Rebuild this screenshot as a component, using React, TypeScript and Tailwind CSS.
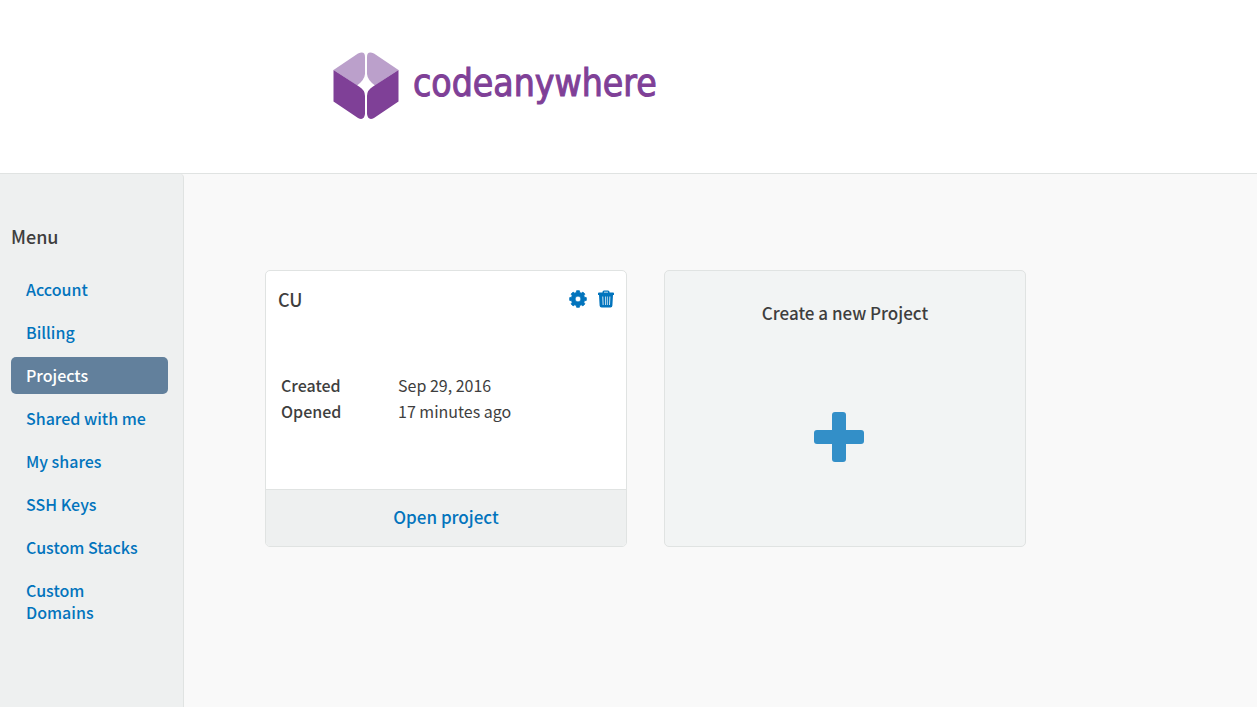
const menuItems = [
  'Account',
  'Billing',
  'Projects',
  'Shared with me',
  'My shares',
  'SSH Keys',
  'Custom Stacks',
  'Custom Domains',
];

function CubeMark() {
  return (
    <svg viewBox="0 0 66 68" className="h-[68px] w-[66px]" aria-hidden="true">
      <g fill="#bba0cb">
        <path d="M0.500 18L25 1.500Q32 -1.500 32 5V22Q31.500 28 24 33.500Z" />
        <path d="M65.500 18L41 1.500Q34 -1.500 34 5V22Q34.500 28 42 33.500Z" />
      </g>
      <g fill="#7f4097">
        <path d="M0.500 18L26 34.500Q32 38 32 44V62Q31 69 25 66L0.500 49.500Z" />
        <path d="M65.500 18L40 34.500Q34 38 34 44V62Q35 69 41 66L65.500 49.500Z" />
      </g>
    </svg>
  );
}

function GearIcon() {
  return (
    <svg viewBox="0 0 18 18" className="size-[18px]" fill="currentColor" aria-hidden="true">
      <path
        fillRule="evenodd"
        stroke="currentColor"
        strokeWidth="0.8"
        strokeLinejoin="round"
        d="M7.600 0.700h2.800l.4 1.900 1.400.6 1.700-1.100 2 2-1.100 1.700.6 1.400 1.900.4v2.800l-1.900.4-.6 1.400 1.100 1.700-2 2-1.700-1.100-1.400.6-.4 1.900H7.600l-.4-1.900-1.400-.6-1.700 1.100-2-2 1.100-1.700-.6-1.400-1.900-.4V7.600l1.900-.4.6-1.400-1.100-1.700 2-2 1.700 1.100 1.400-.6zM9 6.100a2.900 2.900 0 1 0 0 5.800 2.900 2.900 0 0 0 0-5.800z"
      />
    </svg>
  );
}

function TrashIcon() {
  return (
    <svg viewBox="0 0 16 18" className="h-[18px] w-4" fill="currentColor" aria-hidden="true">
      <path
        fillRule="evenodd"
        d="M6 0.500h4a1.500 1.500 0 0 1 1.500 1.500v.5H15a1 1 0 0 1 1 1V5H0V3.500a1 1 0 0 1 1-1h3.500V2A1.500 1.500 0 0 1 6 .5zM6 1.700v.8h4v-.8z"
      />
      <path
        fillRule="evenodd"
        d="M1 5h14l-.6 10.500a2 2 0 0 1-2 2H3.600a2 2 0 0 1-2-2zM4.400 6.500l.3 8.500h.8l-.3-8.500zM7.100 6.500V15h.7V6.500zM8.900 6.500V15h.7V6.500zM11.500 6.500l-.3 8.500h.8l.3-8.500z"
      />
    </svg>
  );
}

function PlusIcon() {
  return (
    <svg viewBox="0 0 50 50" className="size-[50px]" fill="#338fc8" aria-hidden="true">
      <rect x="18" y="0" width="14" height="50" rx="3" />
      <rect x="0" y="18" width="50" height="14" rx="3" />
    </svg>
  );
}

export default function App() {
  return (
    <div className="flex min-h-screen flex-col bg-[#f9f9f9] font-['Noto_Sans_CJK_SC',sans-serif] text-[16px] text-[#3e3e3e]">
      <header className="border-b border-[#e0e3e2] bg-white pt-[52px] pb-[53px] pl-[333px]">
        <a href="#home" className="flex w-fit items-start gap-[14px] text-[#7f4097]">
          <CubeMark />
          <span className="font-['DejaVu_Sans_Condensed','DejaVu_Sans',sans-serif] text-[37px] leading-[64px] [-webkit-text-stroke:1px_#7f4097]">
            codeanywhere
          </span>
        </a>
      </header>

      <div className="flex grow">
        <aside className="w-[184px] shrink-0 rounded-tr border-r border-[#e0e3e2] bg-[#eef0f0] pt-[49px] pr-[15px] pl-[11px]">
          <h2 className="text-[18px] leading-[26px] font-medium">Menu</h2>
          <nav className="mt-[22px] flex flex-col gap-[6px]" aria-label="Menu">
            {menuItems.map((item) => (
              <a
                key={item}
                href="#menu"
                aria-current={item === 'Projects' ? 'page' : undefined}
                className="rounded-[5px] px-[15px] pt-[7px] pb-2 leading-[22px] font-medium text-[#0274bd] aria-[current=page]:bg-[#62809c] aria-[current=page]:text-white"
              >
                {item}
              </a>
            ))}
          </nav>
        </aside>

        <main className="grow px-[81px] pt-24">
          <div className="grid max-w-[761px] grid-cols-2 gap-[37px]">
            <article className="flex flex-col overflow-hidden rounded-[5px] border border-[#e0e3e2] bg-white">
              <div className="flex items-center justify-between pt-[15px] pr-3 pl-3">
                <h3 className="text-[18px] leading-[26px] font-medium">CU</h3>
                <div className="flex gap-[11px] text-[#0274bd]">
                  <button type="button" aria-label="Project settings">
                    <GearIcon />
                  </button>
                  <button type="button" aria-label="Delete project">
                    <TrashIcon />
                  </button>
                </div>
              </div>
              <dl className="mt-[60px] grid grid-cols-[117px_1fr] pb-[65px] pl-[15px] leading-[26px]">
                <dt className="font-medium">Created</dt>
                <dd>Sep 29, 2016</dd>
                <dt className="font-medium">Opened</dt>
                <dd>17 minutes ago</dd>
              </dl>
              <a
                href="#open"
                className="border-t border-[#e0e3e2] bg-[#eef0f0] pt-[14px] pb-4 text-center text-[17px] leading-[26px] font-medium text-[#0274bd]"
              >
                Open project
              </a>
            </article>

            <button
              type="button"
              className="flex flex-col items-center rounded-[5px] border border-[#e0e3e2] bg-[#f2f4f4] pt-[29px]"
            >
              <span className="text-[17px] leading-[26px] font-medium">Create a new Project</span>
              <span className="mt-[86px] pr-3">
                <PlusIcon />
              </span>
            </button>
          </div>
        </main>
      </div>
    </div>
  );
}
